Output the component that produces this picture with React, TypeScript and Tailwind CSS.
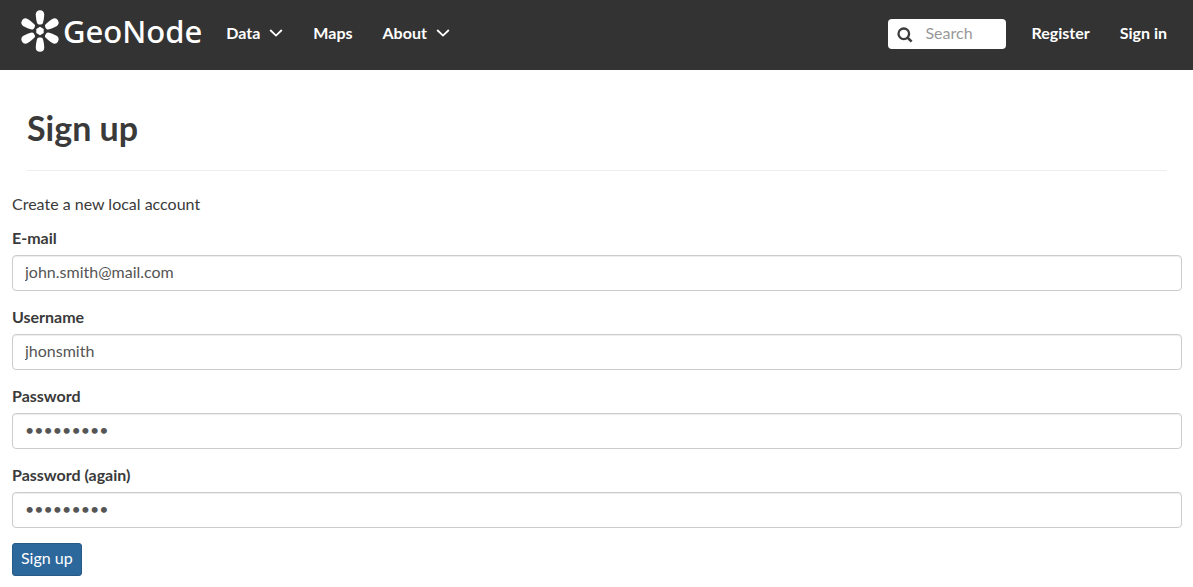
const petals = [0, 60, 120, 180, 240, 300];

const fields = [
  { id: 'email', label: 'E-mail', type: 'email', value: 'john.smith@mail.com' },
  { id: 'username', label: 'Username', type: 'text', value: 'jhonsmith' },
  { id: 'password1', label: 'Password', type: 'password', value: 'secret123' },
  { id: 'password2', label: 'Password (again)', type: 'password', value: 'secret123' },
];

function Logo() {
  return (
    <a href="#" className="flex items-center gap-[3px] font-['Noto_Sans',sans-serif] text-[31px] leading-10 font-medium">
      <svg viewBox="0 0 40 42" className="h-[42px] w-10" fill="currentColor" aria-hidden="true">
        <polygon points="20,16.8 23.7,18.9 23.7,23.1 20,25.2 16.3,23.1 16.3,18.9" />
        {petals.map((angle) => (
          <path
            key={angle}
            transform={`rotate(${angle} 20 21)`}
            d="M20 0.2C22.7 0.2 24.2 1.9 24.2 4.3C24.2 7.5 23.6 10.6 22.8 13.3C22.3 14.9 17.7 14.9 17.2 13.3C16.4 10.6 15.8 7.5 15.8 4.3C15.8 1.9 17.3 0.2 20 0.2Z"
          />
        ))}
      </svg>
      GeoNode
    </a>
  );
}

function Chevron() {
  return (
    <svg viewBox="0 0 14 8" className="mt-0.5 h-2 w-3.5" fill="none" stroke="currentColor" strokeWidth="1.8" aria-hidden="true">
      <path d="M1.2 1L7 6.6L12.8 1" />
    </svg>
  );
}

function SearchIcon() {
  return (
    <svg viewBox="0 0 16 16" className="mt-0.5 h-4 w-4 shrink-0" fill="none" stroke="#3c3c3c" aria-hidden="true">
      <circle cx="6.8" cy="6.8" r="5.3" strokeWidth="2.3" />
      <path d="M10.8 10.8L14.6 14.6" strokeWidth="2.6" />
    </svg>
  );
}

export default function App() {
  return (
    <div className="bg-white font-[Lato,sans-serif] text-base leading-[23px] text-[#3a3a3a]">
      <header className="flex h-[70px] items-center justify-between bg-[#333333] pr-[26px] pl-5 font-bold text-white">
        <div className="flex items-center">
          <div className="pb-2">
            <Logo />
          </div>
          <nav className="ml-6 flex items-center gap-[30px] pb-1.5">
            <button type="button" className="flex items-center gap-[9px]">
              Data
              <Chevron />
            </button>
            <a href="#">Maps</a>
            <button type="button" className="flex items-center gap-[9px]">
              About
              <Chevron />
            </button>
          </nav>
        </div>
        <div className="flex items-center gap-[30px]">
          <label className="-mr-[5px] mb-[3px] flex h-[30px] w-[118px] items-center gap-3 rounded bg-white pl-[9px] font-normal">
            <SearchIcon />
            <input
              type="search"
              aria-label="Search"
              placeholder="Search"
              className="w-full min-w-0 bg-transparent pb-0.5 text-[#555555] outline-none placeholder:text-[#999999]"
            />
          </label>
          <a href="#" className="pb-1.5">Register</a>
          <a href="#" className="pb-1.5">Sign in</a>
        </div>
      </header>
      <main className="pr-[11px] pb-3 pl-3">
        <h1 className="mx-[15px] border-b border-[#eeeeee] pt-[37px] pb-[22px] text-[34px] leading-[41px] font-bold">
          Sign up
        </h1>
        <p className="mt-[21px] mb-[11px]">Create a new local account</p>
        <form onSubmit={(event) => event.preventDefault()}>
          {fields.map((field) => (
            <div key={field.id} className="mb-3.5">
              <label htmlFor={field.id} className="mb-1.5 block font-bold">
                {field.label}
              </label>
              <input
                id={field.id}
                type={field.type}
                defaultValue={field.value}
                className="block h-9 w-full rounded border border-[#cccccc] bg-white px-3 pb-[3px] text-[#555555] shadow-[inset_0_1px_1px_rgba(0,0,0,0.075)]"
              />
            </div>
          ))}
          <button
            type="submit"
            className="mt-[15px] block h-[33px] rounded-[3px] border border-[#265a87] bg-[#2c689c] px-2 pb-1 text-white"
          >
            Sign up
          </button>
        </form>
      </main>
    </div>
  );
}
